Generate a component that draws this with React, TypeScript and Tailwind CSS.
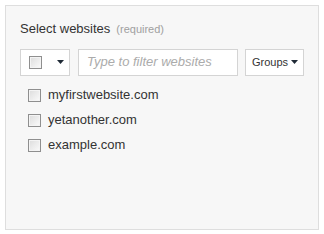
const sites = ["myfirstwebsite.com", "yetanother.com", "example.com"];

function Box() {
  return (
    <span className="block size-[13px] border border-[#8f8f8f] bg-gradient-to-br from-[#dcdcdc] to-[#fbfbfb] shadow-[inset_0_0_0_1px_#f4f4f4]" />
  );
}

function Caret({ className = "" }: { className?: string }) {
  return (
    <svg width="7" height="4" viewBox="0 0 7 4" className={className}>
      <path d="M0 0h7L3.5 4z" fill="#1f2a36" />
    </svg>
  );
}

export default function App() {
  return (
    <div className="h-[234px] w-[324px] bg-white p-[5px] font-['Liberation_Sans',Arial,sans-serif] text-[#333]">
      <div className="h-[225px] w-[314px] border border-[#dedede] bg-[#f7f7f7] px-[14px] pt-[15px]">
        <div className="flex items-baseline gap-[6px]">
          <span className="text-[13px] leading-[16px] text-[#333]">Select websites</span>
          <span className="text-[11px] text-[#a0a0a0]">(required)</span>
        </div>

        <div className="mt-[11px] flex items-center">
          <button className="flex h-[27px] w-[50px] items-center border border-[#d4d4d4] bg-white pl-[8px]">
            <Box />
            <Caret className="ml-[15px]" />
          </button>
          <div className="ml-[8px] flex h-[27px] w-[160px] items-center border border-[#d4d4d4] bg-white pl-[8px]">
            <span className="text-[13px] italic text-[#ababab]">Type to filter websites</span>
          </div>
          <button className="ml-[7px] flex h-[27px] w-[59px] items-center border border-[#d4d4d4] bg-white pl-[6px]">
            <span className="text-[11px] text-[#333]">Groups</span>
            <Caret className="ml-[3px]" />
          </button>
        </div>

        <ul className="mt-[13px] flex flex-col gap-[12px] pl-[8px]">
          {sites.map((s) => (
            <li key={s} className="flex h-[13px] items-center gap-[7px]">
              <Box />
              <span className="text-[13px] text-[#333]">{s}</span>
            </li>
          ))}
        </ul>
      </div>
    </div>
  );
}
